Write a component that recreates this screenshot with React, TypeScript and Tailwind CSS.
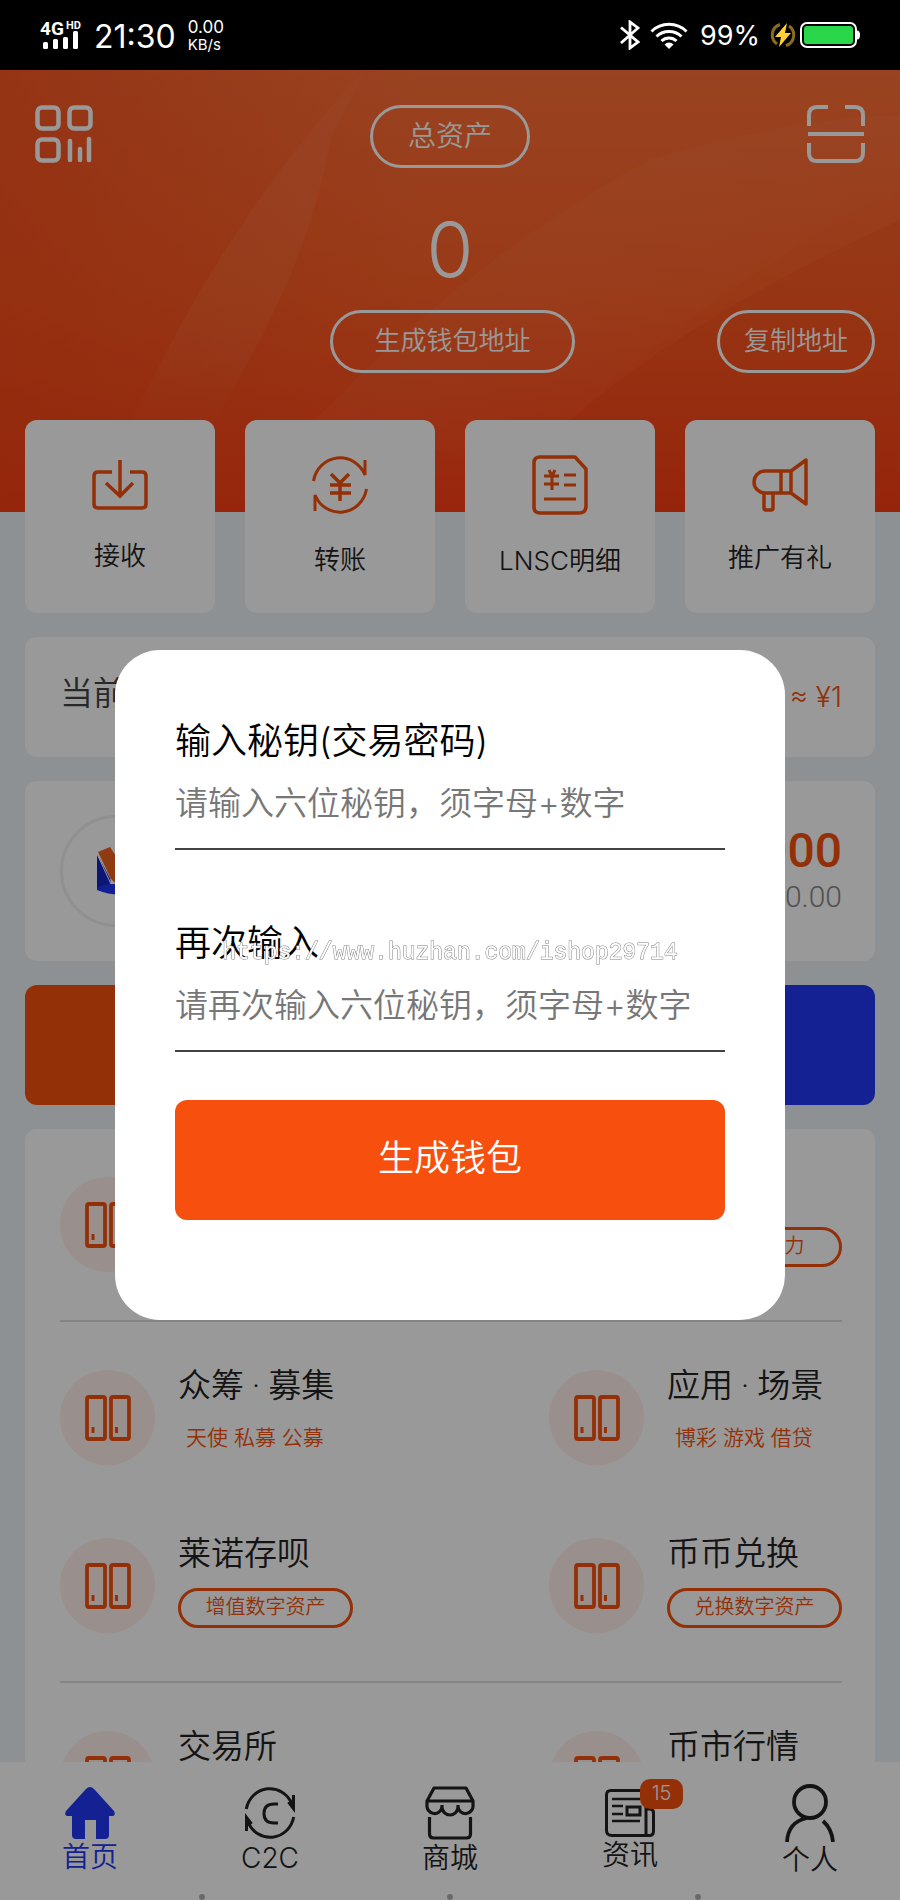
import React from "react";

type IconProps = { className?: string };

const SignalIcon: React.FC = () => (
  <svg viewBox="0 0 44 34" className="w-11 h-[34px] overflow-visible" fill="#fff">
    <text x="0" y="17" fontSize="19" fontWeight="700" fontFamily="Roboto">
      4G
    </text>
    <text x="26" y="11" fontSize="11" fontWeight="700" fontFamily="Roboto">
      HD
    </text>
    <rect x="3" y="24" width="5" height="7" rx="1.5" />
    <rect x="13" y="21" width="5" height="10" rx="1.5" />
    <rect x="23" y="19" width="5" height="12" rx="1.5" />
    <rect x="33" y="13" width="5" height="18" rx="1.5" />
  </svg>
);

const BluetoothIcon: React.FC = () => (
  <svg viewBox="0 0 20 30" className="w-5 h-[30px]" fill="none" stroke="#fff" strokeWidth="2.8">
    <path d="M1 7.500 18 22 10 28V2l8 6L1 23" />
  </svg>
);

const WifiIcon: React.FC = () => (
  <svg viewBox="0 0 38 28" className="w-[38px] h-7" fill="none" stroke="#fff" strokeWidth="3">
    <path d="M1.500 10.500a25 25 0 0 1 35 0M6.500 15.500a18 18 0 0 1 25 0M11.500 20a11 11 0 0 1 15 0" />
    <path d="M14.500 23.500a6 6 0 0 1 9 0L19 28z" fill="#fff" stroke="none" />
  </svg>
);

const ChargeIcon: React.FC = () => (
  <svg viewBox="0 0 26 26" className="w-[26px] h-[26px]" fill="none">
    <path d="M10 2.500a11 11 0 0 0-3 19.500M16 23.500a11 11 0 0 0 3-19.500" stroke="#8a6d1c" strokeWidth="3" />
    <path d="M17 1 5 15h6l-2 10 12-14h-6z" fill="#ffd233" />
  </svg>
);

const BatteryIcon: React.FC = () => (
  <svg viewBox="0 0 60 26" className="w-[60px] h-[26px]" fill="none">
    <rect x="1" y="1" width="55" height="24" rx="6" stroke="#fff" strokeWidth="2" />
    <rect x="4" y="4" width="49" height="18" rx="3" fill="#2bd74a" />
    <path d="M57 8.500q3 0 3 4.500t-3 4.500z" fill="#fff" />
  </svg>
);

const QrIcon: React.FC = () => (
  <svg viewBox="0 0 58 58" className="w-[58px] h-[58px]" fill="none" stroke="currentColor" strokeWidth="4.500">
    <rect x="2.500" y="2.500" width="21" height="21" rx="4.500" />
    <rect x="34.500" y="2.500" width="21" height="21" rx="4.500" />
    <rect x="2.500" y="34.500" width="21" height="21" rx="4.500" />
    <path d="M35 36v19M45 44v11M54 34v21" strokeLinecap="round" />
  </svg>
);

const ScanIcon: React.FC = () => (
  <svg viewBox="0 0 58 58" className="w-[58px] h-[58px]" fill="none" stroke="currentColor" strokeWidth="4">
    <path d="M2 21v-11q0-8 8-8h11M38 2h10q8 0 8 8v11M2 38v10q0 8 8 8h38q8 0 8-8v-10M1 29h56" />
  </svg>
);

const ReceiveIcon: React.FC = () => (
  <svg viewBox="0 0 56 50" className="w-14 h-[50px]" fill="none" stroke="currentColor" strokeWidth="3.500">
    <path d="M20 12H6q-4 0-4 4v28q0 4 4 4h44q4 0 4-4V16q0-4-4-4H38M28 0v35M14 23l14 13 13-13" />
  </svg>
);

const TransferIcon: React.FC = () => (
  <svg viewBox="0 0 56 58" className="w-14 h-[58px] overflow-visible" fill="none" stroke="currentColor" strokeWidth="3">
    <path d="M1.500 25A27 28 0 0 1 53 19V4M54.500 33A27 28 0 0 1 3 39v16" />
    <path d="M19 18l9 9 9-9M28 27v18M18 29h21M18 37h21" strokeWidth="3.500" />
  </svg>
);

const DetailIcon: React.FC = () => (
  <svg viewBox="0 0 56 60" className="w-14 h-[60px]" fill="none" stroke="currentColor" strokeWidth="3.500">
    <path d="M8 2h35l11 12v37q0 7-7 7H8q-6 0-6-6V8q0-6 6-6z" strokeLinejoin="round" />
    <path d="M12 21h15M12 29h15M17 15l3 6 3-6M20 20v15M32 20h12M32 30h12M12 44h32" strokeWidth="3" />
  </svg>
);

const PromoteIcon: React.FC = () => (
  <svg viewBox="0 0 56 54" className="w-14 h-[54px]" fill="none" stroke="currentColor" strokeWidth="3.500" strokeLinejoin="round">
    <path d="M30 13H13a11 11 0 0 0 0 22h17M29 13h10v22H29zM39 13 54 2v44L39 35M12 35v15q0 2 2 2h5q2 0 2-2V35" />
  </svg>
);

const DoorsIcon: React.FC = () => (
  <svg viewBox="0 0 46 46" className="w-[46px] h-[46px]" fill="none" stroke="currentColor" strokeWidth="3.800">
    <rect x="2" y="2" width="18" height="42" rx="2" />
    <rect x="26" y="2" width="18" height="42" rx="2" />
    <path d="M8 32v6M31.500 32v6" strokeWidth="3" />
  </svg>
);

const HomeIcon: React.FC = () => (
  <svg viewBox="0 0 50 52" className="w-[50px] h-[52px]" fill="currentColor">
    <path d="M21 2q4-4 8 0l20 22q2 4-1 5h-4v19q0 4-4 4h-9V33H20v19h-9q-4 0-4-4V29H2q-3-1-1-5z" />
  </svg>
);

const C2CIcon: React.FC = () => (
  <svg viewBox="0 0 50 54" className="w-[50px] h-[54px] overflow-visible" fill="none" stroke="currentColor" strokeWidth="3">
    <path d="M1.300 23A24 25 0 0 1 47 18M48.700 31A24 25 0 0 1 3 36" />
    <path d="M48.500 9v13.500L43.500 16M1.500 45V31.500L6.500 38" />
    <path d="M33 18h-4q-10 0-10 9.500T29 37h4" />
  </svg>
);

const ShopIcon: React.FC = () => (
  <svg viewBox="0 0 50 54" className="w-[50px] h-[54px]" fill="none" stroke="currentColor" strokeWidth="3.200" strokeLinejoin="round">
    <path d="M9 2h32l7 13v4a7.500 7.500 0 0 1-15 2 8 8 0 0 1-16 0 7.500 7.500 0 0 1-15-2v-4zM2 15h46M17 19v3M33 19v3" />
    <path d="M4.500 31v17q0 4 4 4h33q4 0 4-4V31" />
  </svg>
);

const NewsIcon: React.FC = () => (
  <svg viewBox="0 0 50 48" className="w-[50px] h-12" fill="none" stroke="currentColor" strokeWidth="3">
    <path d="M42 20h3q3.500 0 3.500 4v18q0 4.500-4 4.500H7q-5.500 0-5.500-5V6q0-4.500 4.500-4.500h35v45" />
    <path d="M7 10h28M7 17h11M7 25h11M7 32h28" strokeWidth="2.500" />
    <rect x="22" y="18" width="13" height="8" />
  </svg>
);

const UserIcon: React.FC = () => (
  <svg viewBox="0 0 50 58" className="w-[50px] h-[58px]" fill="none" stroke="currentColor" strokeWidth="3.800">
    <circle cx="25" cy="18" r="16" />
    <path d="M2 58q1-20 20-24M38 37q9 8 10 21" />
  </svg>
);

const CoinLogo: React.FC<IconProps> = ({ className }) => (
  <svg viewBox="0 0 40 50" className={className}>
    <path d="M1 8v34l14 4V34z" fill="#1527c4" />
    <path d="M1 42q13-8 38 0v4q-18 6-38-2z" fill="#1d34f0" />
    <path d="M2 6 14 1l25 38-10 8-14-14z" fill="#f0621f" />
    <path d="M1 8 15 38v-5" fill="none" stroke="#fff" />
  </svg>
);

const HeroArt: React.FC = () => (
  <svg viewBox="0 0 900 442" preserveAspectRatio="none" className="absolute inset-0 w-full h-full">
    <defs>
      <linearGradient id="wedge" x1="0" y1="0" x2="0" y2="1">
        <stop offset="0" stopColor="#fff" stopOpacity="0.020" />
        <stop offset="0.600" stopColor="#ffb080" stopOpacity="0.120" />
        <stop offset="1" stopColor="#fff" stopOpacity="0" />
      </linearGradient>
      <linearGradient id="fan" x1="0" y1="0" x2="1" y2="1">
        <stop offset="0.300" stopColor="#ffb080" stopOpacity="0.080" />
        <stop offset="0.700" stopColor="#fff" stopOpacity="0" />
      </linearGradient>
      <linearGradient id="side" x1="0" y1="0" x2="1" y2="0">
        <stop offset="0" stopColor="#f04010" stopOpacity="0.500" />
        <stop offset="1" stopColor="#f04010" stopOpacity="0" />
      </linearGradient>
    </defs>
    <rect width="420" height="442" fill="url(#side)" />
    <path d="M365 0Q230 140 125 365H205Q310 200 330 70Z" fill="url(#wedge)" />
    <path d="M315 350Q480 180 650 90Q780 50 900 45V120Q680 230 520 400Z" fill="url(#fan)" />
    <path d="M560 360Q680 250 900 150V442H500Z" fill="#e6340a" fillOpacity="0.150" />
  </svg>
);

const shortcuts = [
  { label: "接收", Icon: ReceiveIcon },
  { label: "转账", Icon: TransferIcon },
  { label: "LNSC明细", Icon: DetailIcon },
  { label: "推广有礼", Icon: PromoteIcon },
];

type Service = { title: string; tag: string; outlined?: boolean };

const serviceGroups: Service[][][] = [
  [
    [
      { title: "矿池", tag: "挖矿收益", outlined: true },
      { title: "算力", tag: "产出云算力", outlined: true },
    ],
  ],
  [
    [
      { title: "众筹 · 募集", tag: "天使 私募 公募" },
      { title: "应用 · 场景", tag: "博彩 游戏 借贷" },
    ],
    [
      { title: "莱诺存呗", tag: "增值数字资产", outlined: true },
      { title: "币币兑换", tag: "兑换数字资产", outlined: true },
    ],
  ],
  [
    [
      { title: "交易所", tag: "全球交易" },
      { title: "币市行情", tag: "实时行情" },
    ],
  ],
];

const tabs = [
  { label: "首页", Icon: HomeIcon, active: true },
  { label: "C2C", Icon: C2CIcon },
  { label: "商城", Icon: ShopIcon },
  { label: "资讯", Icon: NewsIcon, badge: 15 },
  { label: "个人", Icon: UserIcon },
];

const StatusBar: React.FC = () => (
  <div className="flex shrink-0 items-center justify-between h-[70px] px-10 bg-black text-white">
    <div className="flex items-center">
      <SignalIcon />
      <span className="ml-2.5 pt-1 text-[32px] font-normal">21:30</span>
      <span className="flex flex-col ml-3 pt-0.5 text-[17px] leading-[17px] font-normal">
        <span>0.00</span>
        <span className="text-[15px]">KB/s</span>
      </span>
    </div>
    <div className="flex items-center">
      <BluetoothIcon />
      <span className="ml-2.5">
        <WifiIcon />
      </span>
      <span className="ml-3 mr-2.5 pt-0.5 text-[27px] font-normal">99%</span>
      <ChargeIcon />
      <span className="ml-1">
        <BatteryIcon />
      </span>
    </div>
  </div>
);

const Hero: React.FC = () => (
  <section className="relative h-[442px] bg-linear-to-b from-[#ff7038] via-[#ff6026] to-[#ff3e16] text-white">
    <HeroArt />
    <div className="relative pt-[35px]">
      <div className="flex items-start justify-between px-[35px]">
        <button aria-label="收款码">
          <QrIcon />
        </button>
        <button className="h-[63px] w-40 pb-0.5 rounded-full border-3 border-white text-[28px]">
          总资产
        </button>
        <button aria-label="扫一扫">
          <ScanIcon />
        </button>
      </div>
      <p className="mt-9 text-center text-[76px] leading-[90px]">0</p>
      <div className="flex mt-4 pl-[30px] pr-[25px]">
        <div className="flex-1" />
        <button className="h-[63px] w-[245px] pb-0.5 rounded-full border-3 border-white text-[26px]">
          生成钱包地址
        </button>
        <div className="flex flex-1 justify-end">
          <button className="h-[63px] w-[158px] pb-0.5 rounded-full border-3 border-white text-[26px]">
            复制地址
          </button>
        </div>
      </div>
    </div>
  </section>
);

const ServiceItem: React.FC<Service> = ({ title, tag, outlined }) => (
  <a href="#" className="flex w-[293px] gap-[23px]">
    <span className="flex shrink-0 items-center justify-center w-[95px] h-[95px] rounded-full bg-[#fff0eb] text-[#f5510d]">
      <DoorsIcon />
    </span>
    <span className="flex flex-1 flex-col gap-[18px]">
      <span className="text-[33px] leading-8 whitespace-nowrap font-[Roboto,'Noto_Sans_CJK_SC',sans-serif]">
        {title}
      </span>
      {outlined ? (
        <span className="flex items-center justify-center h-10 pb-0.5 rounded-full border-3 border-[#f5510d] text-xl text-[#f5510d]">
          {tag}
        </span>
      ) : (
        <span className="px-2 text-[21px] leading-9 text-[#f5510d]">{tag}</span>
      )}
    </span>
  </a>
);

const TabBar: React.FC = () => (
  <nav className="relative shrink-0 grid grid-cols-5 h-[138px] bg-white">
    {tabs.map(({ label, Icon, active, badge }) => (
      <a
        key={label}
        href="#"
        className={`flex flex-col items-center justify-center text-[28px] leading-9 ${
          active ? "text-[#2037f5]" : "text-[#222]"
        }`}
      >
        <span className="relative">
          <Icon />
          {badge && (
            <span className="absolute -top-2.5 left-[35px] w-[43px] h-[30px] rounded-[10px] bg-[#f5510d] text-center text-xl leading-7 text-white">
              {badge}
            </span>
          )}
        </span>
        {label}
      </a>
    ))}
    <div className="absolute inset-x-0 bottom-0 flex justify-between px-[199px]">
      <span className="w-1.5 h-1.5 rounded-full bg-[#b0b0b0]" />
      <span className="w-1.5 h-1.5 rounded-full bg-[#b0b0b0]" />
      <span className="w-1.5 h-1.5 rounded-full bg-[#b0b0b0]" />
    </div>
  </nav>
);

const WalletDialog: React.FC = () => (
  <div className="fixed inset-x-0 top-[70px] bottom-0 z-10 flex items-center justify-center px-[115px] bg-black/40">
    <form
      role="dialog"
      aria-modal="true"
      className="flex flex-col w-full pt-16 pb-[100px] px-[60px] rounded-[45px] bg-white text-black"
    >
      <label htmlFor="secret" className="text-4xl leading-[54px]">
        输入秘钥(交易密码)
      </label>
      <input
        id="secret"
        type="password"
        placeholder="请输入六位秘钥，须字母+数字"
        className="w-full h-[82px] pb-2.5 border-b-2 border-[#424242] text-[33px] placeholder:text-[#777] outline-none"
      />
      <label htmlFor="secret-again" className="mt-[66px] text-4xl leading-[54px]">
        再次输入
      </label>
      <input
        id="secret-again"
        type="password"
        placeholder="请再次输入六位秘钥，须字母+数字"
        className="w-full h-[82px] pb-2.5 border-b-2 border-[#424242] text-[33px] placeholder:text-[#777] outline-none"
      />
      <button type="button" className="mt-12 h-[120px] pb-1 rounded-xl bg-[#f7500e] text-4xl text-white">
        生成钱包
      </button>
    </form>
  </div>
);

const App: React.FC = () => {
  return (
    <div className="flex flex-col h-screen bg-[#edf2f6] font-[350] text-[#222] font-[Inter,'Noto_Sans_CJK_SC',sans-serif]">
      <StatusBar />
      <main className="flex-1 min-h-0 overflow-hidden">
        <Hero />
        <div className="relative flex flex-col gap-6 -mt-[92px] px-[25px]">
          <div className="grid grid-cols-4 gap-[30px]">
            {shortcuts.map(({ label, Icon }) => (
              <a
                key={label}
                href="#"
                className="flex flex-col items-center justify-center gap-7 h-[193px] rounded-xl bg-white text-[26px] leading-9"
              >
                <span className="text-[#f5510d]">
                  <Icon />
                </span>
                {label}
              </a>
            ))}
          </div>

          <div className="flex items-center justify-between h-[120px] pl-[35px] pr-[33px] rounded-xl bg-white">
            <span className="pb-1.5 text-[33px] text-[#444]">当前价格</span>
            <span className="text-[28px] text-[#f5510d]">≈ ¥1</span>
          </div>

          <div className="flex items-center justify-between h-[180px] pl-[35px] pr-[33px] rounded-xl bg-white">
            <span className="flex items-center justify-center w-28 h-28 rounded-full border-3 border-[#f0f0f0]">
              <CoinLogo className="w-10 h-[50px]" />
            </span>
            <span className="flex flex-col items-end font-[Roboto]">
              <span className="text-[48px] leading-[52px] font-medium text-[#f5510d]">0.0000</span>
              <span className="text-[30px] leading-10 text-[#888]">≈ ¥0.00</span>
            </span>
          </div>

          <div className="grid grid-cols-2 gap-[30px]">
            <button className="h-[120px] rounded-xl bg-[#f5510d] text-4xl text-white">买入</button>
            <button className="h-[120px] rounded-xl bg-[#2038f3] text-4xl text-white">卖出</button>
          </div>

          <div className="pl-[35px] pr-[33px] rounded-xl bg-white divide-y-2 divide-[#dcdcdc]">
            {serviceGroups.map((rows, i) => (
              <div key={i} className="flex flex-col gap-[73px] py-12">
                {rows.map((items, j) => (
                  <div key={j} className="flex justify-between">
                    {items.map((item) => (
                      <ServiceItem key={item.title} {...item} />
                    ))}
                  </div>
                ))}
              </div>
            ))}
          </div>
        </div>
      </main>
      <TabBar />

      <WalletDialog />
      <div className="fixed inset-0 z-20 flex items-center justify-center pt-1.5 pointer-events-none">
        <span className="text-[23px] font-normal text-white [-webkit-text-stroke:1px_#808080] [paint-order:stroke] font-['Liberation_Mono',monospace]">
          https://www.huzhan.com/ishop29714
        </span>
      </div>
    </div>
  );
};

export default App;
